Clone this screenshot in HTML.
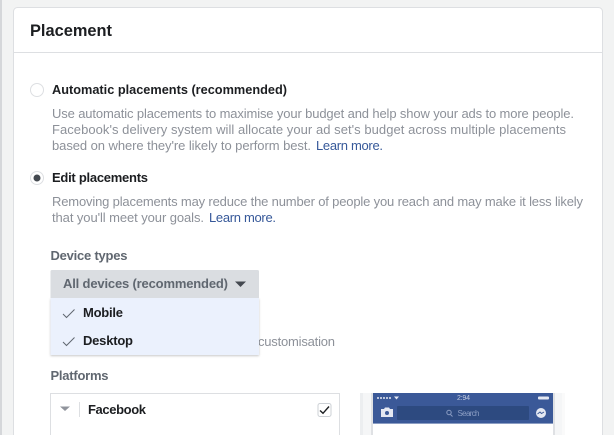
<!DOCTYPE html>
<html><head><meta charset="utf-8"><style>
html,body{margin:0;padding:0;width:614px;height:435px;overflow:hidden;background:#f2f3f3}
svg{display:block;filter:blur(.25px)}
text{font-family:"Liberation Sans",Arial,sans-serif;font-size:13px}
.b{font-weight:700;fill:#1c1e21}
.g{fill:#8d9199}
.l{fill:#365899}
.h{font-weight:700;fill:#606770}
</style></head><body>
<svg width="614" height="435" viewBox="0 0 614 435" xmlns="http://www.w3.org/2000/svg">
<defs><filter id="s" x="-5%" y="-5%" width="110%" height="115%"><feDropShadow dx="0" dy="1" stdDeviation="1" flood-color="#000" flood-opacity=".22"/></filter></defs>
<rect x="0" y="0" width="2" height="435" fill="#d5d7da"/>
<rect x="13.500" y="7.500" width="589" height="440" rx="4" fill="#fff" stroke="#dddfe2"/>
<rect x="14" y="52" width="588" height="1" fill="#dddfe2"/>
<text x="30" y="36" class="b" style="font-size:17px" textLength="82" lengthAdjust="spacingAndGlyphs">Placement</text>

<circle cx="37" cy="90" r="6.500" fill="#fff" stroke="#dddfe2"/>
<text x="52" y="94" class="b" textLength="235" lengthAdjust="spacingAndGlyphs">Automatic placements (recommended)</text>
<text x="52" y="118" class="g" textLength="522">Use automatic placements to maximise your budget and help show your ads to more people.</text>
<text x="52" y="134" class="g" textLength="514">Facebook's delivery system will allocate your ad set's budget across multiple placements</text>
<text x="52" y="150" class="g" textLength="259">based on where they're likely to perform best.</text>
<text x="316" y="150" class="l" textLength="67">Learn more.</text>

<circle cx="37" cy="178" r="6.500" fill="#fff" stroke="#dddfe2"/>
<circle cx="37" cy="178" r="3.500" fill="#444950"/>
<text x="52" y="182" class="b" textLength="96">Edit placements</text>
<text x="52" y="206" class="g" textLength="531">Removing placements may reduce the number of people you reach and may make it less likely</text>
<text x="52" y="222" class="g" textLength="152">that you'll meet your goals.</text>
<text x="209" y="222" class="l" textLength="67">Learn more.</text>

<text x="50.500" y="260" class="h" textLength="77">Device types</text>
<text x="258" y="346" class="g" textLength="77">customisation</text>

<rect x="50.500" y="298" width="208.500" height="57" fill="#ebf1fd" filter="url(#s)"/>
<path d="M50.500 271.500a1.500 1.500 0 0 1 1.500-1.500h205.500a1.500 1.500 0 0 1 1.500 1.500V298H50.500z" fill="#dadde1"/>
<text x="63" y="288" class="h" textLength="165">All devices (recommended)</text>
<path d="M235 281.500h11l-5.500 5.500z" fill="#444950"/>

<path d="M63 314l3.500 3.500 8-8" fill="none" stroke="#606770" stroke-width="1"/>
<text x="83" y="317" class="b" textLength="40">Mobile</text>
<path d="M63 342l3.500 3.500 8-8" fill="none" stroke="#606770" stroke-width="1"/>
<text x="83" y="345" class="b" textLength="50">Desktop</text>

<text x="50.500" y="380" class="h" textLength="58">Platforms</text>

<path d="M50.500 436V393.500H339.500V436" fill="#fff" stroke="#dddfe2"/>
<path d="M60 406.500h10l-5 4.500z" fill="#90949c"/>
<rect x="79" y="402" width="1" height="15" fill="#dddfe2"/>
<text x="88" y="414" class="b" textLength="58">Facebook</text>
<rect x="318" y="403.500" width="13" height="13" rx="2" fill="#fff" stroke="#ccd0d5"/>
<path d="M320 410.500l3 2.800 6-6.800" fill="none" stroke="#1c1e21" stroke-width="1.400"/>

<rect x="360" y="393" width="205" height="42" fill="#f5f6f7"/>
<rect x="360" y="393" width="3" height="42" fill="#eceef0"/>
<rect x="562" y="393" width="3" height="42" fill="#fafafa"/>
<rect x="371" y="393" width="2" height="42" fill="#dfe1e4"/>
<rect x="553" y="393" width="2" height="42" fill="#dfe1e4"/>
<rect x="373" y="423" width="180" height="12" fill="#fff"/>
<rect x="373" y="393" width="180" height="30" fill="#3b5998"/>
<rect x="373" y="423" width="180" height="1" fill="#8b9dc3"/>
<rect x="397" y="406" width="132" height="14" rx="1" fill="#2d4a80"/>
<g fill="#e4e8f2">
<rect x="377" y="397" width="2" height="2" rx="1"/>
<rect x="380" y="397" width="2" height="2" rx="1"/>
<rect x="383" y="397" width="2" height="2" rx="1"/>
<rect x="386" y="397" width="2" height="2" rx="1"/>
<rect x="389" y="397" width="2" height="2" rx="1"/>
<path d="M394 396.500h5l-2.500 3z"/>
<rect x="538" y="396.500" width="11" height="3" rx="1"/>
<path d="M381 409h3l1-1.500h4l1 1.500h3v8h-12z"/>
<circle cx="541" cy="413" r="5"/>
</g>
<circle cx="387" cy="413" r="2" fill="#3b5998"/>
<path d="M537.500 414l2.500-2 1.500 1.500 2.500-1.500" fill="none" stroke="#3b5998" stroke-width="1"/>
<text x="457" y="400" style="font-size:7px" fill="#c5cde0" textLength="13">2:94</text>
<circle cx="449" cy="412.500" r="2.200" fill="none" stroke="#8b9dc3"/>
<path d="M450.500 414.500l2 2" stroke="#8b9dc3"/>
<text x="457.500" y="416" style="font-size:8px" fill="#8b9dc3" textLength="22">Search</text>
</svg>
</body></html>
